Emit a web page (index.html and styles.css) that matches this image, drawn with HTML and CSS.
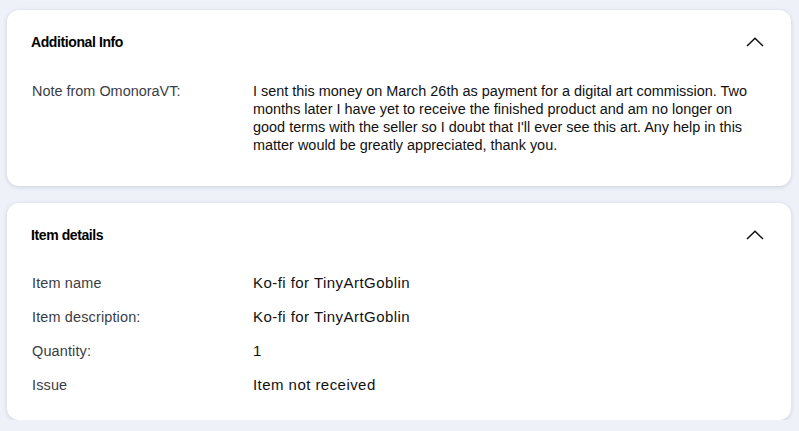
FILE: index.html
```html
<!DOCTYPE html>
<html lang="en">
<head>
<meta charset="utf-8">
<title>Dispute details</title>
<link rel="stylesheet" href="styles.css">
</head>
<body>
<main class="page">
  <section class="card card-info">
    <header class="card-head">
      <h2 class="card-title">Additional Info</h2>
      <svg class="chevron" width="18" height="10" viewBox="0 0 18 10" aria-hidden="true"><path d="M1 9 L9 1.2 L17 9" fill="none" stroke="#111" stroke-width="1.5"/></svg>
    </header>
    <div class="card-body">
      <div class="row">
        <div class="label">Note from OmonoraVT:</div>
        <div class="value">I sent this money on March 26th as payment for a digital art commission. Two months later I have yet to receive the finished product and am no longer on good terms with the seller so I doubt that I'll ever see this art. Any help in this matter would be greatly appreciated, thank you.</div>
      </div>
    </div>
  </section>
  <section class="card card-items">
    <header class="card-head">
      <h2 class="card-title">Item details</h2>
      <svg class="chevron" width="18" height="10" viewBox="0 0 18 10" aria-hidden="true"><path d="M1 9 L9 1.2 L17 9" fill="none" stroke="#111" stroke-width="1.5"/></svg>
    </header>
    <div class="card-body">
      <div class="row"><div class="label">Item name</div><div class="value">Ko-fi for TinyArtGoblin</div></div>
      <div class="row"><div class="label">Item description:</div><div class="value">Ko-fi for TinyArtGoblin</div></div>
      <div class="row"><div class="label">Quantity:</div><div class="value">1</div></div>
      <div class="row"><div class="label">Issue</div><div class="value">Item not received</div></div>
    </div>
  </section>
</main>
</body>
</html>
```
FILE: styles.css
```css
* { box-sizing: border-box; }
html, body { margin: 0; padding: 0; }
body {
  background: #eef1f8;
  font-family: "Liberation Sans", Arial, sans-serif;
  font-size: 14.45px;
  color: #111;
}
.page {
  padding: 10px 8px 0 7px;
  display: flex;
  flex-direction: column;
  gap: 17px;
}
.card {
  background: #fff;
  border-radius: 12px;
  box-shadow: 0 1px 4px rgba(30, 40, 80, 0.16);
  padding: 22px 27px 0 24px;
}
.card-info { height: 176px; }
.card-items { height: 217px; }
.card-head {
  display: flex;
  align-items: center;
  justify-content: space-between;
  height: 20px;
}
.card-title {
  margin: 0;
  font-size: 14px;
  font-weight: 700;
  letter-spacing: -0.4px;
  color: #000;
  line-height: 20px;
}
.chevron { display: block; margin-top: -1px; }
.card-body {
  padding-top: 22px;
}
.card-items .card-body { padding-top: 21px; }
.row {
  display: flex;
  padding: 8px 0;
  line-height: 18px;
}
.label {
  width: 222px;
  padding-left: 1px;
  color: #3a3d44;
  flex: none;
}
.card-items .label { letter-spacing: 0.15px; }
.value {
  flex: 1;
  color: #111;
  padding-right: 8px;
}
.card-items .value {
  font-size: 15px;
  letter-spacing: 0.45px;
}
```
